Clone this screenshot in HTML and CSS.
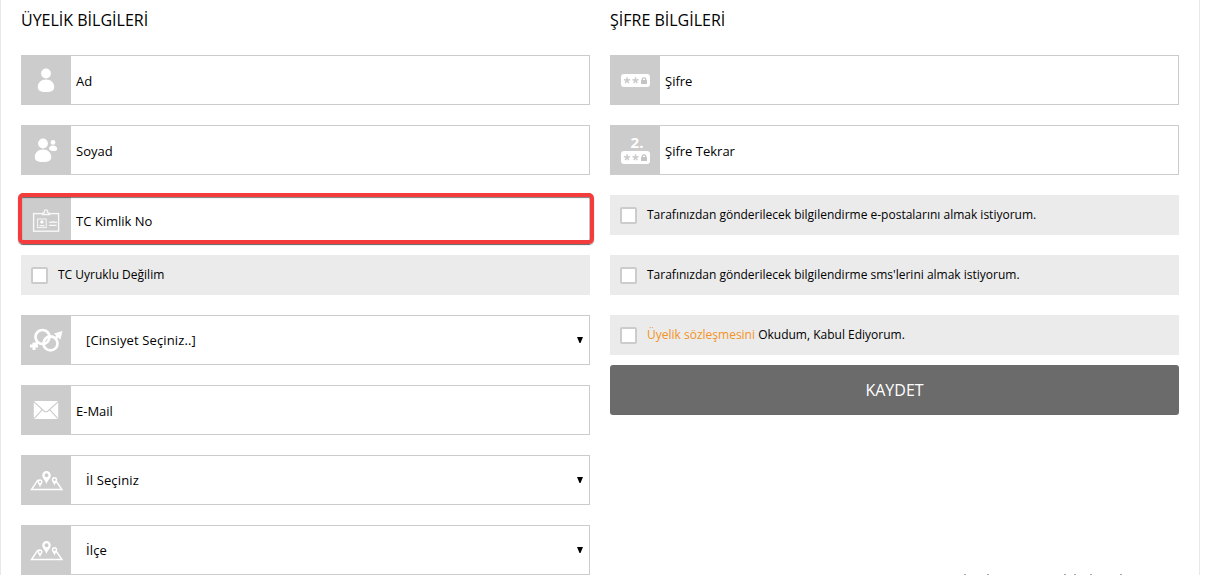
FILE: index.html
```html
<!DOCTYPE html>
<html lang="tr">
<head>
<meta charset="utf-8">
<title>Üyelik</title>
<link rel="stylesheet" href="styles.css">
</head>
<body>
<svg class="defs" width="0" height="0">
  <defs>
    <symbol id="map" viewBox="0 0 50 50">
      <path d="M19 25.500h-2.500L10.500 34.500h30.500L35 26" fill="none" stroke="#fff" stroke-width="1.400"/>
      <path fill="#fff" fill-rule="evenodd" d="M25.500 16a4.300 4.300 0 0 0-4.300 4.300c0 3 3 4.700 4.300 8.700 1.300-4 4.300-5.700 4.300-8.700a4.300 4.300 0 0 0-4.300-4.300zm0 2.300a2 2 0 1 1 0 4 2 2 0 0 1 0-4z"/>
      <path fill="#fff" fill-rule="evenodd" d="M33.500 22a2.700 2.700 0 0 0-2.700 2.700c0 2 2 3 2.700 6 .7-3 2.700-4 2.700-6a2.700 2.700 0 0 0-2.700-2.700zm0 1.500a1.200 1.200 0 1 1 0 2.400 1.200 1.200 0 0 1 0-2.400z"/>
      <path fill="#fff" fill-rule="evenodd" d="M19 24.300a2.500 2.500 0 0 0-2.500 2.500c0 1.800 1.800 2.700 2.500 5.700.7-3 2.500-3.900 2.500-5.700a2.500 2.500 0 0 0-2.500-2.500zm0 1.500a1.100 1.100 0 1 1 0 2.200 1.100 1.100 0 0 1 0-2.200z"/>
    </symbol>
    <symbol id="pass" viewBox="0 0 29 13">
      <rect width="29" height="13" rx="3" fill="#fff"/>
      <path d="M6 6.500V3.300M6 6.500l-3-1M6 6.500l3-1M6 6.500L4.200 9.200M6 6.500l1.800 2.700M14.500 6.500V3.300M14.500 6.500l-3-1M14.500 6.500l3-1M14.500 6.500l-1.800 2.700M14.500 6.500l1.800 2.700" stroke="#ccc" stroke-width="1.500" fill="none"/>
      <path d="M21.200 6.500v-.8a1.800 1.800 0 0 1 3.600 0v.8" stroke="#c4c4c4" stroke-width="1.300" fill="none"/>
      <rect x="20" y="6" width="6" height="4" rx=".5" fill="#c4c4c4"/>
    </symbol>
  </defs>
</svg>
<main class="panel">
  <section class="col">
    <h2 class="title">ÜYELİK BİLGİLERİ</h2>
    <div class="field">
      <svg class="icon" viewBox="0 0 50 50" fill="#fff"><circle cx="25" cy="18.500" r="4.900"/><path d="M25 24.500c5 0 8.200 3.200 8.200 7.500 0 3.500-2 5-8.200 5s-8.200-1.500-8.200-5c0-4.300 3.200-7.500 8.200-7.500z"/></svg>
      <span class="label">Ad</span>
    </div>
    <div class="field">
      <svg class="icon" viewBox="0 0 50 50" fill="#fff"><circle cx="22" cy="18.500" r="4.900"/><path d="M22 24.500c5 0 8.200 3.200 8.200 7.500 0 3.500-2 5-8.200 5s-8.200-1.500-8.200-5c0-4.300 3.200-7.500 8.200-7.500z"/><circle cx="32" cy="17.400" r="2.400"/><path d="M32 20.600c2.500 0 4.200 1.500 4.200 3.500 0 1.500-1.200 2-3.900 2-1.800 0-3.400-.6-4.300-2 .1-2 1.500-3.500 4-3.500z"/></svg>
      <span class="label">Soyad</span>
    </div>
    <div class="field field-id">
      <svg class="icon" viewBox="0 0 50 50" fill="none" stroke="#fff" stroke-opacity=".85"><rect x="12.600" y="18.600" width="25" height="17.600" stroke-width="1.400"/><path d="M21.500 19.500v-1l2-1c-1-3.600 4-3.600 3 0l2 1v1z" stroke-width="1.300" fill="#ccc"/><rect x="16.600" y="24" width="8.600" height="8.600"/><circle cx="20.900" cy="27" r="1.300" fill="#fff"/><path d="M18.500 30.700h5M28 27.400h2l1-.7 1 .7 1-.7 1 .7h2M28 30.400h7.500" stroke-width="1.200"/></svg>
      <span class="label">TC Kimlik No</span>
      <span class="highlight"></span>
    </div>
    <label class="check check-near"><input class="box" type="checkbox"><span class="check-text">TC Uyruklu Değilim</span></label>
    <div class="field">
      <svg class="icon" viewBox="0 0 50 50" fill="none" stroke="#fff" stroke-width="2.700"><circle cx="21.500" cy="22" r="7"/><circle cx="29.500" cy="28.400" r="7"/><path d="M34.500 23.400l3-3M16.400 27.300l-3.400 3.400"/><path d="M33 18.500l8.500-2.500-2.200 8.700-2.300-2.300-2-2z" fill="#fff" stroke="none"/><path d="M9 31h8M13 27.500v7.500" stroke-width="3"/></svg>
      <span class="label label-select">[Cinsiyet Seçiniz..]</span>
      <svg class="arrow" viewBox="0 0 6 6"><path d="M0 0h6L3.500 6h-1z"/></svg>
    </div>
    <div class="field">
      <svg class="icon" viewBox="0 0 50 50"><rect x="12.800" y="16" width="24.400" height="18" rx="1.500" fill="#fff"/><path d="M13 16.800l10 9.200q2 1.600 4 0l10-9.200M13.300 33.300l7.800-8.400M36.700 33.300l-7.800-8.400" fill="none" stroke="#ccc" stroke-width="1.100"/></svg>
      <span class="label">E-Mail</span>
    </div>
    <div class="field">
      <svg class="icon"><use href="#map"/></svg>
      <span class="label label-select">İl Seçiniz</span>
      <svg class="arrow" viewBox="0 0 6 6"><path d="M0 0h6L3.500 6h-1z"/></svg>
    </div>
    <div class="field">
      <svg class="icon"><use href="#map"/></svg>
      <span class="label label-select">İlçe</span>
      <svg class="arrow" viewBox="0 0 6 6"><path d="M0 0h6L3.500 6h-1z"/></svg>
    </div>
  </section>
  <section class="col">
    <h2 class="title">ŞİFRE BİLGİLERİ</h2>
    <div class="field">
      <span class="icon icon-pass"><svg class="pass"><use href="#pass"/></svg></span>
      <span class="label">Şifre</span>
    </div>
    <div class="field">
      <span class="icon icon-pass icon-repeat"><b class="two">2.</b><svg class="pass"><use href="#pass"/></svg></span>
      <span class="label">Şifre Tekrar</span>
    </div>
    <label class="check"><input class="box" type="checkbox"><span class="check-text">Tarafınızdan gönderilecek bilgilendirme e-postalarını almak istiyorum.</span></label>
    <label class="check"><input class="box" type="checkbox"><span class="check-text">Tarafınızdan gönderilecek bilgilendirme sms'lerini almak istiyorum.</span></label>
    <label class="check"><input class="box" type="checkbox"><span class="check-text"><a class="link">Üyelik sözleşmesini</a> Okudum, Kabul Ediyorum.</span></label>
    <button class="save" type="button">KAYDET</button>
  </section>
</main>
<svg class="marks" viewBox="0 0 160 1"><path d="M0 .5h2M23 .5h2M100 .5h2M110 .5h2M126 .5h2M156 .5h2" stroke="#aaa"/></svg>
</body>
</html>
```
FILE: styles.css
```css
* { box-sizing: border-box; }
body {
  margin: 0;
  height: 575px;
  overflow: hidden;
  background: #fff;
  color: #000;
  font: 13px/20px "Open Sans", sans-serif;
}
.defs { position: absolute; }
.panel {
  display: flex;
  gap: 20px;
  width: 1200px;
  height: 575px;
  padding: 0 20px;
  border: solid #e8e8e8;
  border-width: 0 1px;
}
.col {
  display: flex;
  flex-direction: column;
  gap: 20px;
  width: 569px;
}
.title {
  margin: 0;
  height: 35px;
  padding-top: 8px;
  font-size: 16px;
  line-height: 24px;
  font-weight: 400;
}
.field {
  position: relative;
  display: flex;
  align-items: center;
  flex: none;
  height: 50px;
  padding-right: 6px;
  border: 1px solid #ccc;
}
.icon {
  display: block;
  flex: none;
  width: 50px;
  height: 50px;
  margin-left: -1px;
  background: #ccc;
}
.icon-pass {
  display: flex;
  flex-direction: column;
  align-items: center;
  justify-content: center;
}
.icon-repeat { justify-content: flex-start; padding-top: 10px; }
.two {
  height: 16px;
  margin-left: 4px;
  color: #fff;
  font-size: 15px;
  line-height: 15px;
}
.pass { display: block; width: 29px; height: 13px; }
.label { flex: 1; padding: 1px 0 0 5px; }
.label-select { padding: 0 0 1px 15px; letter-spacing: .13px; }
.arrow { width: 6px; height: 6px; }
.highlight {
  position: absolute;
  inset: -3px -5px 0 -4px;
  height: 51px;
  border: 4px solid #f43c3c;
  border-radius: 5px;
  box-shadow: 0 1px 1px rgba(0, 0, 0, .5), inset 0 1px 1px rgba(0, 0, 0, .5);
}
.check {
  display: flex;
  align-items: center;
  flex: none;
  height: 40px;
  padding-left: 10px;
  background: #ebebeb;
  font-size: 12px;
}
.check-near { margin-top: -10px; }
.box {
  appearance: none;
  flex: none;
  width: 17px;
  height: 17px;
  margin: 1px 10px 0 0;
  border: 2px solid #ccc;
  border-radius: 2px;
  background: #fff;
}
.link { color: #f39324; }
.save {
  height: 50px;
  margin-top: -10px;
  padding: 0;
  border: 0;
  border-radius: 3px;
  background: #6b6b6b;
  color: #fff;
  font: 16px/24px "Open Sans", sans-serif;
}
.marks {
  position: absolute;
  left: 964px;
  top: 574px;
  width: 160px;
  height: 1px;
}
```
